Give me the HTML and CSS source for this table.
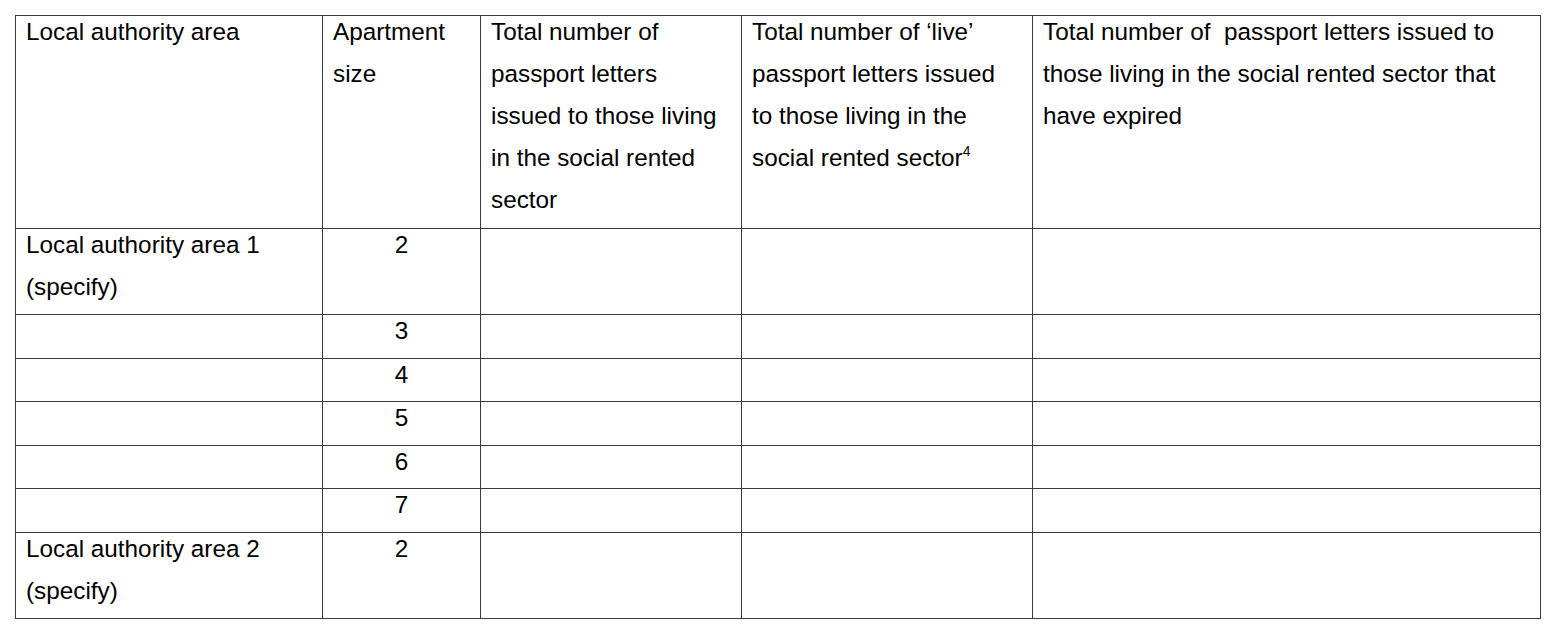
FILE: index.html
```html
<!DOCTYPE html>
<html>
<head>
<meta charset="utf-8">
<link rel="stylesheet" href="styles.css">
</head>
<body>
<div class="page">
<table class="grid">
  <colgroup>
    <col class="c1"><col class="c2"><col class="c3"><col class="c4"><col class="c5">
  </colgroup>
  <tr class="head">
    <td><div class="t">Local authority area</div></td>
    <td><div class="t">Apartment size</div></td>
    <td><div class="t">Total number of passport letters issued to those living in the social rented sector</div></td>
    <td><div class="t">Total number of ‘live’ passport letters issued to those living in the social rented sector<sup>4</sup></div></td>
    <td><div class="t">Total number of &nbsp;passport letters issued to those living in the social rented sector that have expired</div></td>
  </tr>
  <tr class="double">
    <td><div class="t">Local authority area 1 (specify)</div></td>
    <td class="num"><div class="t">2</div></td>
    <td></td><td></td><td></td>
  </tr>
  <tr class="single">
    <td></td><td class="num"><div class="t">3</div></td><td></td><td></td><td></td>
  </tr>
  <tr class="single">
    <td></td><td class="num"><div class="t">4</div></td><td></td><td></td><td></td>
  </tr>
  <tr class="single">
    <td></td><td class="num"><div class="t">5</div></td><td></td><td></td><td></td>
  </tr>
  <tr class="single">
    <td></td><td class="num"><div class="t">6</div></td><td></td><td></td><td></td>
  </tr>
  <tr class="single">
    <td></td><td class="num"><div class="t">7</div></td><td></td><td></td><td></td>
  </tr>
  <tr class="double">
    <td><div class="t">Local authority area 2 (specify)</div></td>
    <td class="num"><div class="t">2</div></td>
    <td></td><td></td><td></td>
  </tr>
</table>
</div>
</body>
</html>
```
FILE: styles.css
```css
html, body {
  margin: 0;
  padding: 0;
  background: #ffffff;
}
.page {
  padding: 15px 0 0 15px;
}
.grid {
  border-collapse: collapse;
  table-layout: fixed;
  width: 1526px;
  font-family: "Liberation Sans", Arial, sans-serif;
  font-size: 24.3px;
  line-height: 42px;
  color: #000;
}
.c1 { width: 307px; }
.c2 { width: 158px; }
.c3 { width: 261px; }
.c4 { width: 291px; }
.c5 { width: 508px; }
.grid td {
  border: 1px solid #3a3a3a;
  padding: 0 18px 0 10px;
  vertical-align: top;
  overflow: hidden;
}
.grid td.num {
  padding: 0 10px;
  text-align: center;
}
.t {
  margin-top: -5px;
}
.head td { height: 212px; }
.double td { height: 85px; }
.single td { height: 42.6px; }
sup {
  font-size: 14px;
  line-height: 0;
  vertical-align: 10px;
}
```
